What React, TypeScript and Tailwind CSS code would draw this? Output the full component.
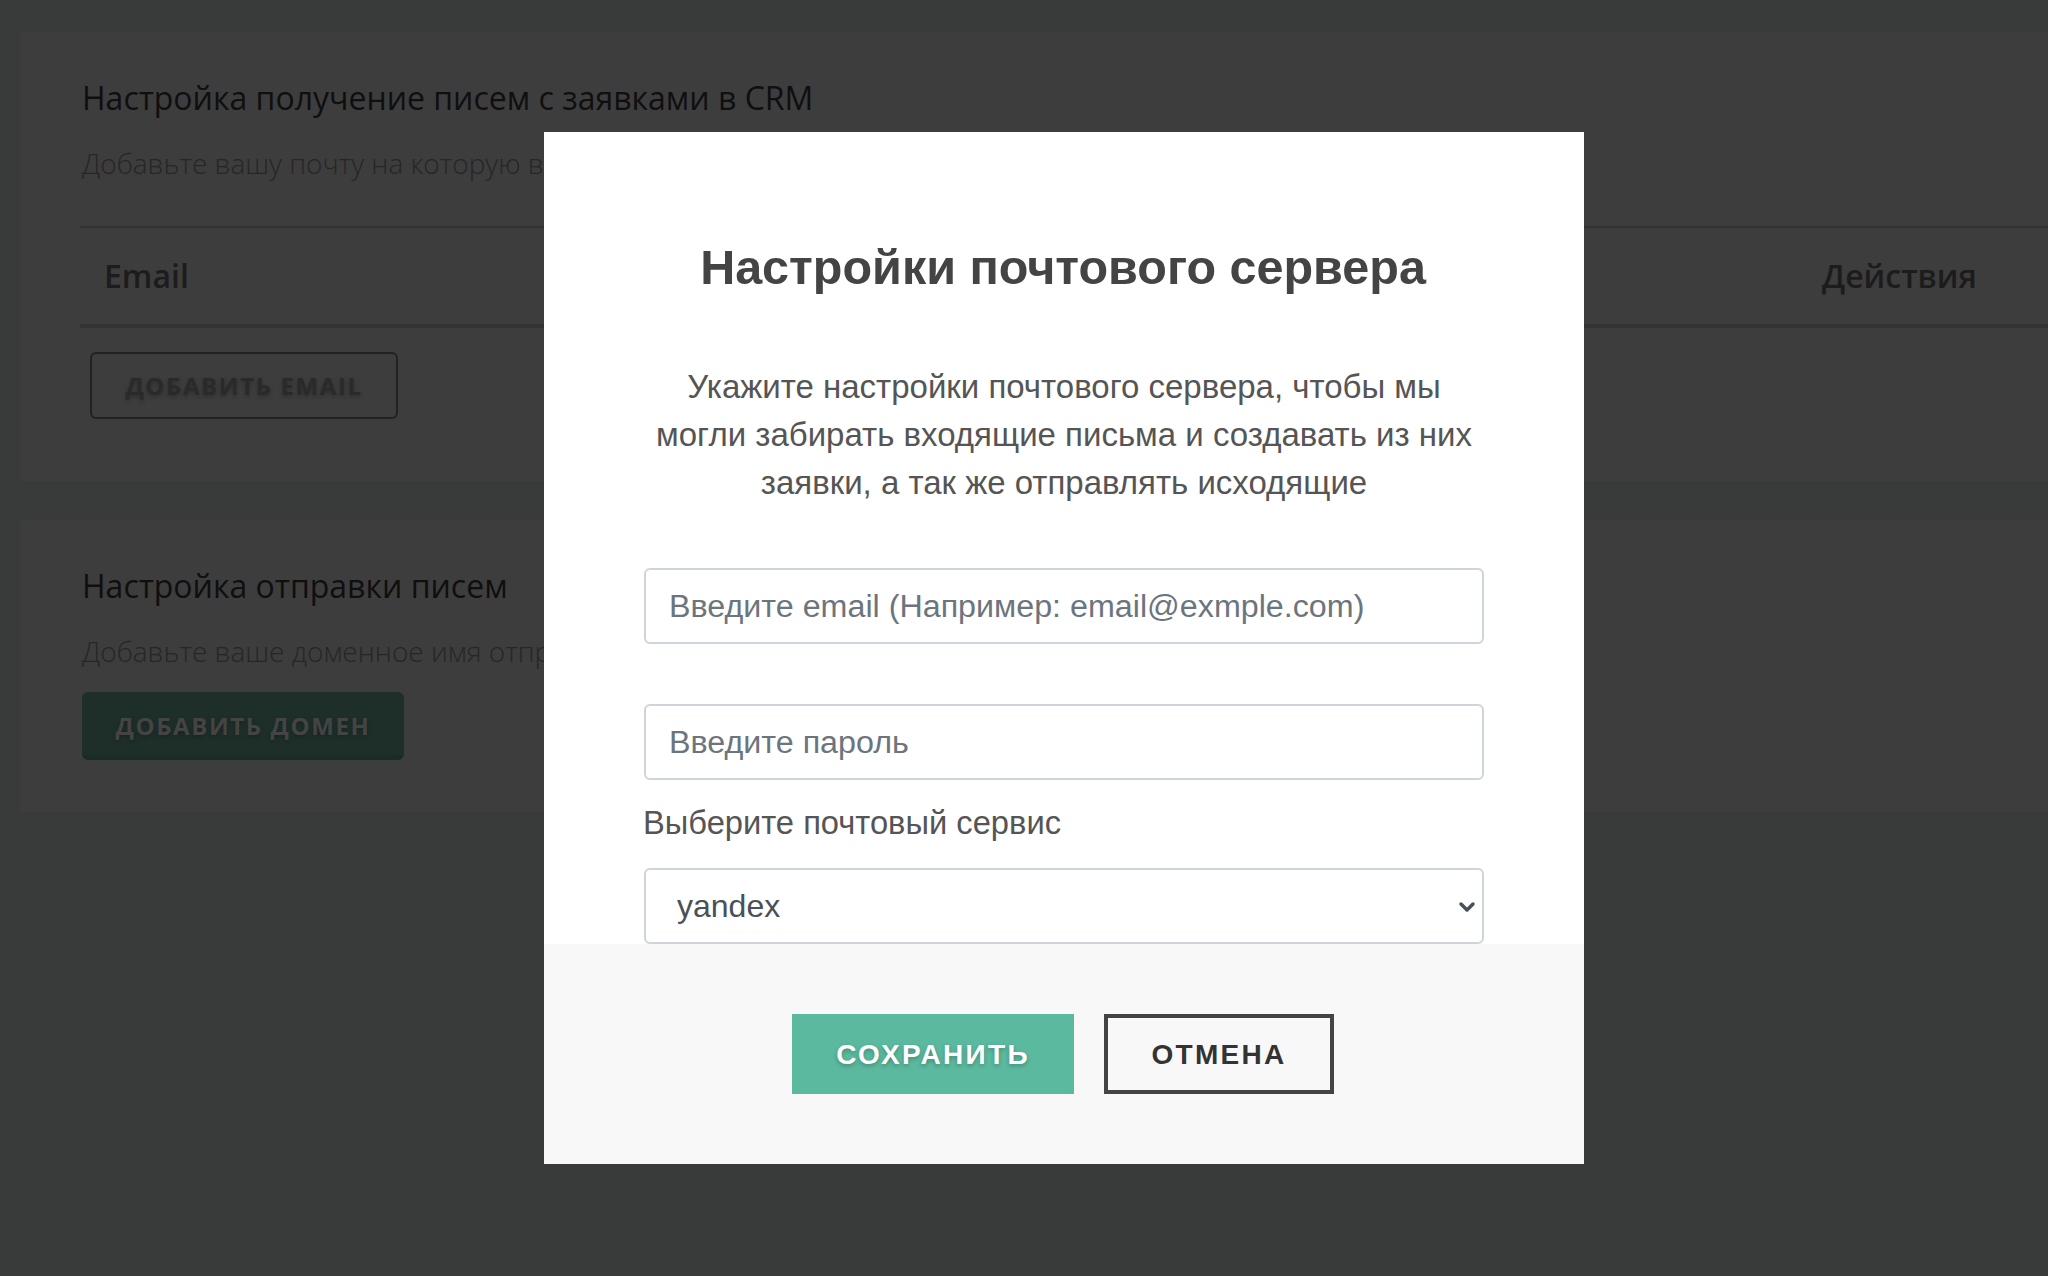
import { ChevronDown } from "lucide-react";

const openSans = "font-['Open_Sans',sans-serif]";

function Backdrop() {
  return (
    <div className={`h-[1276px] overflow-hidden bg-[#393b3a] pl-5 pt-8 ${openSans}`}>
      {/* Email section */}
      <section className="h-[449px] w-[2100px] bg-[#3d3d3d] pl-[62px] pt-[44px]">
        <h2 className="text-[32px] leading-[44px] text-[#0f0f0f]">Настройка получение писем с заявками в CRM</h2>
        <p className="mt-[23px] text-[28px] font-light leading-[40px] text-[#262626]">
          Добавьте вашу почту на которую вы хотите получать заявки
        </p>
        <div className="-ml-0.5 mt-[43px] flex h-[102px] w-[2040px] items-center border-t-2 border-b-4 border-t-[#333333] border-b-[#333333] pl-6">
          <span className="w-[1718px] text-[32px] font-semibold text-[#1c1c1c]">Email</span>
          <span className="text-[32px] font-semibold text-[#1c1c1c]">Действия</span>
        </div>
        <button className="ml-2 mt-6 h-[67px] w-[308px] rounded-md border-2 border-[#222222] text-[24px] font-bold tracking-[1.6px] text-[#2a2a2a] [text-shadow:0_2px_4px_rgba(0,0,0,0.25)]">
          ДОБАВИТЬ EMAIL
        </button>
      </section>

      {/* Domain section */}
      <section className="mt-[39px] h-[292px] w-[2100px] bg-[#3d3d3d] pl-[62px] pt-[44px]">
        <h2 className="text-[32px] leading-[44px] text-[#0f0f0f]">Настройка отправки писем</h2>
        <p className="mt-[23px] text-[28px] font-light leading-[40px] text-[#262626]">
          Добавьте ваше доменное имя отправки писем
        </p>
        <button className="mt-[21px] h-[68px] w-[322px] rounded-md border-b-[5px] border-b-[#1b2c28] bg-[#1e2f2a] pt-1 text-[24px] font-bold tracking-[1.6px] text-[#444444] [text-shadow:0_2px_4px_rgba(0,0,0,0.25)]">
          ДОБАВИТЬ ДОМЕН
        </button>
      </section>
    </div>
  );
}

function MailServerModal() {
  return (
    <div className="absolute left-[544px] top-[132px] flex h-[1032px] w-[1040px] flex-col bg-white font-['Liberation_Sans',sans-serif]">
      <div className="h-[812px] overflow-hidden px-[100px] pt-[106px]">
        <h1 className="-ml-0.5 text-center text-[48.5px] font-bold leading-[59px] text-[#444444]">Настройки почтового сервера</h1>
        <p className="mt-[66px] text-center text-[33px] leading-[48px] text-[#555555]">
          Укажите настройки почтового сервера, чтобы мы
          <br />
          могли забирать входящие письма и создавать из них
          <br />
          заявки, а так же отправлять исходящие
        </p>
        <input
          type="text"
          placeholder="Введите email (Например: email@exmple.com)"
          className="mt-[61px] h-[76px] w-full rounded-md border-2 border-[#ced4da] px-[23px] text-[32.25px] text-[#495057] outline-none placeholder:text-[#6c757d]"
        />
        <input
          type="password"
          placeholder="Введите пароль"
          className="mt-[60px] h-[76px] w-full rounded-md border-2 border-[#ced4da] px-[23px] text-[32.25px] text-[#495057] outline-none placeholder:text-[#6c757d]"
        />
        <label className="-ml-px mt-[23px] block text-[32.7px] leading-[40px] text-[#555555]">Выберите почтовый сервис</label>
        <div className="relative mt-[25px]">
          <select className="h-[76px] w-full appearance-none rounded-md border-2 border-[#ced4da] bg-white pl-[31px] text-[32px] text-[#495057] outline-none">
            <option>yandex</option>
          </select>
          <ChevronDown className="pointer-events-none absolute right-[5px] top-[27px] h-6 w-6 text-[#495057]" strokeWidth={3.5} />
        </div>
      </div>
      <div className="flex flex-1 justify-center gap-[30px] bg-[#f8f8f8] pr-0.5 pt-[70px]">
        <button className="h-20 w-[282px] bg-[#5ab99e] pt-0.5 text-[28px] font-bold tracking-[2.3px] text-white [text-shadow:0_2px_4px_rgba(0,0,0,0.25)]">
          СОХРАНИТЬ
        </button>
        <button className="h-20 w-[230px] border-4 border-[#444444] pt-0.5 text-[28px] font-bold tracking-[2.3px] text-[#333333]">
          ОТМЕНА
        </button>
      </div>
    </div>
  );
}

export default function App() {
  return (
    <div className="relative h-[1276px] overflow-hidden">
      <Backdrop />
      <MailServerModal />
    </div>
  );
}
